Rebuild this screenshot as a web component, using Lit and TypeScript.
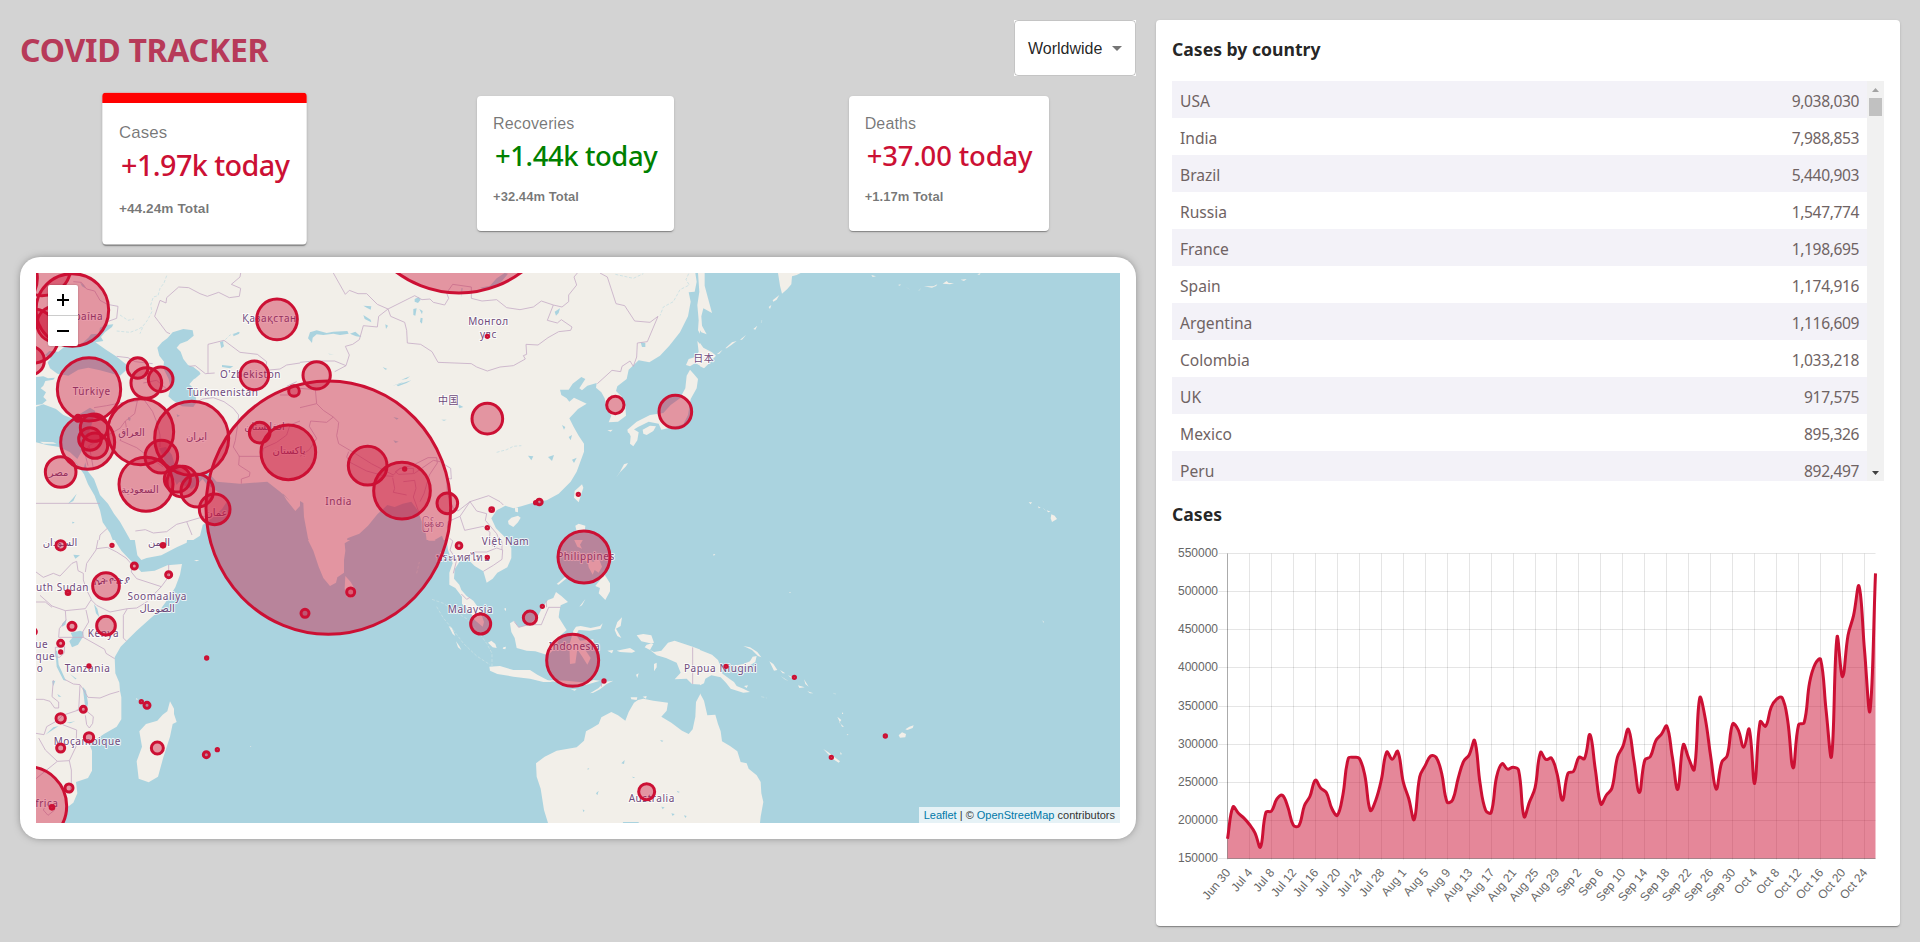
import { LitElement, html, svg, css } from "lit";
import { customElement, property } from "lit/decorators.js";
import { classMap } from "lit/directives/class-map.js";

const COUNTRIES: [string, string][] = [
  ["USA", "9,038,030"],
  ["India", "7,988,853"],
  ["Brazil", "5,440,903"],
  ["Russia", "1,547,774"],
  ["France", "1,198,695"],
  ["Spain", "1,174,916"],
  ["Argentina", "1,116,609"],
  ["Colombia", "1,033,218"],
  ["UK", "917,575"],
  ["Mexico", "895,326"],
  ["Peru", "892,497"],
];

/* Daily new cases, in hundreds, from Jun 30 to Oct 26. */
const DAILY = [
  1758, 2176, 2093, 2029, 1946, 1837, 1650, 2106, 2121, 2281, 2329, 2172, 1937, 1930, 2193, 2313,
  2526, 2421, 2365, 2156, 2066, 2330, 2813, 2827, 2813, 2593, 2131, 2265, 2527, 2896, 2803, 2904,
  2505, 2287, 2011, 2571, 2718, 2845, 2826, 2615, 2239, 2270, 2549, 2775, 2858, 3046, 2483, 2134,
  2101, 2571, 2744, 2672, 2698, 2661, 2050, 2243, 2427, 2891, 2798, 2817, 2615, 2264, 2617, 2641,
  2827, 2809, 3126, 2658, 2214, 2333, 2421, 2827, 2970, 3196, 2789, 2366, 2792, 2836, 3045, 3128,
  3235, 2833, 2407, 2992, 2811, 2668, 3607, 3336, 2833, 2410, 2761, 2849, 3266, 3186, 2958, 3196,
  2484, 3295, 3235, 3483, 3590, 3610, 3314, 2689, 3256, 3279, 3807, 4049, 4113, 3445, 2840, 4404,
  3884, 4429, 4685, 5072, 4232, 3438, 5240,
];

const TICKS = [
  "Jun 30", "Jul 4", "Jul 8", "Jul 12", "Jul 16", "Jul 20", "Jul 24", "Jul 28", "Aug 1", "Aug 5",
  "Aug 9", "Aug 13", "Aug 17", "Aug 21", "Aug 25", "Aug 29", "Sep 2", "Sep 6", "Sep 10", "Sep 14",
  "Sep 18", "Sep 22", "Sep 26", "Sep 30", "Oct 4", "Oct 8", "Oct 12", "Oct 16", "Oct 20", "Oct 24",
];

@customElement("stat-card")
class StatCard extends LitElement {
  @property() label = "";
  @property() today = "";
  @property() total = "";
  @property({ type: Boolean }) positive = false;
  @property({ type: Boolean, reflect: true }) selected = false;

  static styles = css`
    :host {
      display: block;
      box-sizing: border-box;
      height: 135px;
      padding: 16px;
      background: #fff;
      border-radius: 4px;
      color: rgba(0, 0, 0, 0.54);
      font-family: "Liberation Sans", Arial, sans-serif;
      box-shadow: 0 2px 1px -1px rgba(0, 0, 0, 0.2), 0 1px 1px rgba(0, 0, 0, 0.14), 0 1px 3px rgba(0, 0, 0, 0.12);
      white-space: nowrap;
    }
    :host([selected]) {
      height: 145px;
      border-top: 10px solid #ff0000;
      transform: scale(1.05);
    }
    .label {
      font-size: 16px;
      line-height: 24px;
      letter-spacing: 0.15px;
    }
    .today {
      margin: 1px 0 14px 2px;
      color: #cc1034;
      font: 500 27.4px/37px "Noto Sans", "Open Sans", sans-serif;
      letter-spacing: -0.12px;
    }
    .today.positive {
      color: green;
      letter-spacing: -0.38px;
    }
    :host([selected]) .today {
      letter-spacing: -0.55px;
    }
    .total {
      font-size: 13px;
      line-height: 18px;
      font-weight: 700;
      letter-spacing: 0.05px;
    }
  `;

  render() {
    return html`
      <div class="label">${this.label}</div>
      <div class=${classMap({ today: true, positive: this.positive })}>${this.today}</div>
      <div class="total">${this.total}</div>
    `;
  }
}

interface Tile {
  x: number;
  y: number;
  w: number;
  h: number;
  ox: number;
  oy: number;
  ground: "land" | "sea";
  sea?: string;
  land?: string;
  lake?: string;
  border?: string;
  faint?: string;
}

/* Base map tiles. Path units are a third of a pixel, offset by (ox, oy). */
const TILES: Tile[] = [
  {
    x: 0, y: 0, w: 264, h: 267, ox: 48, oy: 54, ground: "land",
    sea: `M75 300L88 288 115 290 140 270 165 276 190 262 205 248 213 238 236 236 240 218 258 210 280 208 276 216 255 232 243 246 250 258 226 262 258 284 288 304 318 328 318 346 300 362 270 354 240 346 205 338 175 344 145 362 112 356 90 340 83 322 92 312Z
      M48 455L70 448 108 462 130 480 160 492 178 478 210 458 226 468 220 490 212 520 196 560 184 590 172 612 150 592 118 576 80 570 48 562Z
      M48 366L70 364 84 370 105 368 100 374 76 378 70 392 62 400 78 412 70 426 80 436 66 448 48 450Z
      M490 222L518 226 521 242 502 258 480 266 470 278 482 290 490 312 504 330 520 336 540 352 524 370 508 388 522 402 530 442 520 456 486 454 458 436 445 424 452 400 446 372 430 340 432 320 418 302 412 278 426 262 442 250 458 232Z
      M158 610L176 632 190 644 196 622 201 646 222 672 240 720 264 746 282 776 300 800 328 850 346 884 346 900 290 900 284 870 270 834 248 802 240 766 224 722 204 688 192 658Z
      M418 580L438 576 456 600 466 636 490 656 520 668 545 656 562 652 575 664 590 680 660 686 742 680 782 712 812 740 786 712 800 736 826 768 848 744 852 800 860 840 884 900 400 900 450 884 500 868 540 842 548 810 580 786 606 762 624 734 590 708 560 688 548 672 530 690 514 702 490 690 478 680 470 690 452 650 436 622Z`,
    land: "M784 712L806 710 826 706 816 722 800 722Z M190 480L214 474 206 482 196 486Z M60 560L100 562 110 566 70 566Z",
    lake: `M868 244L878 230 896 226 886 240 874 262 864 256Z M600 262L608 258 612 274 604 280Z M640 238L656 230 658 236 640 244Z M514 335L528 344 542 356 524 372 514 360Z M180 82L192 90 196 100 186 94Z M606 330L640 334 630 340 606 336Z
      M324 486L332 490 330 498 324 494Z M470 478L480 482 472 486Z M144 746L160 728 170 716 160 738Z M156 800L164 802 158 806Z`,
    faint: "M440 62L432 84 420 100 414 122 400 126 392 150 396 170 382 196 370 212 360 236 M290 228L330 232 352 224 370 214 M660 232L630 240 616 254 606 266 M300 180L324 196 342 192",
    border: `M662 54L660 66 634 88 662 100 658 124 628 128 596 112 562 124 540 116 506 98 476 96 440 128 438 144 420 136 404 184 416 200 440 232 450 236
      M160 80L184 82 200 102 224 108 240 136 262 148 294 154 290 190 262 200
      M508 334L526 332 556 356 584 354 M564 354L564 268 612 256 660 292 712 298 740 320 736 346 780 342 800 330 840 324
      M290 304L324 308 346 320 398 326 M318 346L340 366 380 372 M370 384L410 376 440 402
      M222 458L260 452 300 444 352 438 360 430 378 434 M352 438L344 476 316 498 320 524 300 556 350 578 390 608 430 636
      M372 434L398 470 412 506 420 540 420 576 M520 446L548 432 580 428 612 440 640 460 656 480 652 516 646 556 640 576 658 604 656 630 690 652 688 664 664 672 664 686
      M656 604L726 604 730 580 770 562 800 540 810 510 840 498
      M240 840L230 900 M240 840L262 820 M346 828L376 824 400 834 440 830 470 808 500 800 554 784 M500 800L516 840 M48 745L240 745
      M204 632L196 600 206 572 230 560 264 540 M264 540L300 520 316 498 M208 574L220 640 M800 394L830 380 M780 420L840 420`,
  },
  {
    x: 0, y: 267, w: 264, h: 283, ox: 48, oy: 30, ground: "sea",
    land: `M340 0L346 40 352 76 364 90 380 84 424 76 470 52 500 38 502 24 540 10 562 8 562 0Z
      M0 0L276 0 286 34 304 62 328 88 346 106 364 126 404 122 442 106 486 102 480 134 466 172 446 204 420 240 386 270 350 302 322 330 302 350 284 382 286 430 298 458 300 482 304 502 304 568 290 590 252 612 208 642 216 662 216 722 204 744 168 756 172 790 160 818 144 830 128 879 0 879Z
      M450 514L462 536 462 552 470 576 458 582 450 620 430 682 414 740 386 757 356 746 350 694 366 650 358 604 378 582 412 572 428 554 442 544Z
      M522 90L538 90 530 94Z M348 504L354 508 350 510Z M690 648L694 649 692 651Z`,
    lake: `M152 308L180 302 190 306 188 322 174 344 156 352 148 334 158 322Z M106 360L112 364 116 404 138 452 130 450 110 410Z M188 470L198 482 204 520 200 540 194 520Z M222 222L232 236 238 262 228 250Z M126 282L140 268 136 284 126 290Z
      M76 614L100 592 116 588 92 604Z M96 454L106 452 100 468Z M140 578L166 574 150 580Z M160 74L180 76 166 86Z M112 492L124 500 116 500Z M150 432L170 446 166 448Z`,
    border: `M48 126L70 142 100 130 120 138 156 100 170 94 174 122 190 130 190 150 200 180 214 208 196 236 136 242 96 228 60 196
      M196 126L200 100 228 60 236 20 242 10 M230 56L262 52 290 66 318 84 336 104 334 126 350 146 424 170 446 140 446 104 M424 170L380 216 350 234 322 236 270 246 230 226 214 210 M322 236L310 256 310 324 320 334
      M48 216L76 216 96 232 M136 242L138 270 118 296 116 322 190 322 188 306 206 276 198 240 M190 322L254 358 258 370 284 386
      M106 352L134 350 132 370 118 382 106 380Z M100 450L96 500 116 516 116 534 104 534 90 514 70 508 48 508
      M134 448L160 462 180 464 188 476 204 502 240 504 270 492 298 484 M180 466L176 540 128 556 112 572 80 590 72 614 48 610 M128 584L170 600 168 650 148 692 112 694 76 660 56 624
      M170 540L196 540 220 560 218 580 208 594 200 584 196 556 M148 692L154 720 154 756 150 790 134 780 138 760 M112 694L48 746 M70 840L84 856 104 840 94 824 78 824Z M346 0L350 10 400 6`,
  },
  {
    x: 264, y: 0, w: 400, h: 267, ox: 0, oy: 54, ground: "land",
    sea: `M1186 54L1190 80 1184 110 1166 112 1172 140 1164 184 1140 232 1108 272 1080 302 1048 322 1016 316 986 344 980 372 952 394 948 408 964 424 976 452 978 482 954 500 926 502 934 482 920 462 914 430 904 412 888 398 890 384 862 392 846 406 838 400 856 372 844 366 818 386 806 404 780 404 784 420 800 430 808 440 822 428 860 446 834 462 808 490 820 514 836 542 852 566 852 590 830 650 812 680 776 716 740 736 704 742 664 754 640 760 616 752 590 766 574 790 588 820 618 850 634 880 636 900 1260 900 1260 54Z
      M136 900L142 850 178 836 204 812 232 778 262 750 284 756 308 746 334 740 352 764 366 800 376 826 380 856 402 856 426 842 440 880 442 900Z
      M0 738L10 744 12 786 24 850 46 900 0 900Z`,
    land: `M1194 54L1214 54 1214 92 1224 130 1232 172 1210 160 1202 186 1206 214 1218 238 1206 246 1194 226 1196 196 1192 150 1198 110Z
      M1192 258L1210 278 1236 292 1250 304 1226 326 1212 340 1186 324 1170 334 1158 330 1166 312 1186 306 1196 290Z
      M1170 344L1182 358 1194 372 1190 400 1172 432 1164 480 1150 508 1120 516 1084 524 1076 506 1046 500 1014 516 984 534 982 524 1010 500 1050 480 1090 474 1112 450 1140 430 1156 400 1160 362Z
      M984 528L1000 522 1016 532 1012 556 1000 574 990 566 992 544Z M1028 524L1050 512 1068 514 1060 528 1040 540 1030 536Z
      M846 688L850 698 836 742 822 728 824 708Z M624 798L634 788 654 782 662 788 654 802 640 816 626 808Z M644 756L654 758 654 772 646 770Z M826 812L836 806 856 812 854 830 830 830Z
      M972 628L984 624 978 634 960 652 948 668 960 650Z M922 526L938 524 932 530Z M776 454L788 454 780 456Z`,
    lake: `M24 250L30 232 50 226 80 234 100 230 142 228 146 236 120 240 100 236 70 240 50 238 38 248 36 264Z M344 132L356 126 362 134 354 144 344 140Z M190 152L214 154 212 164 200 158Z M190 180L212 194 214 202 194 192Z M150 236L166 230 184 246 168 244Z
      M256 208L264 212 258 222Z M340 162L350 160 346 182 340 180Z M358 162L368 168 366 178Z M362 188L368 190 366 206 360 200Z M290 390L334 376 320 384 294 394Z M304 374L330 364 320 372Z M278 392L312 380 300 386Z
      M764 170L780 160 776 174 768 182Z M1022 262L1036 264 1036 276 1026 276Z M472 446L490 456 478 460Z M424 494L440 494 432 497Z M248 336L262 342 256 344Z M744 606L762 600 756 618Z M684 602L700 604 694 616Z M786 510L796 516 792 524Z M806 546L816 540 812 556Z M816 614L830 608 822 624Z M84 296L102 298 88 298Z
      M540 98L570 92 590 70 614 54 624 56 606 78 584 94 556 104Z M484 100L484 128 488 100Z M280 486L296 490 290 494Z M280 556L296 560 286 564Z`,
    faint: "M590 592L620 584 640 574 664 572 M1166 56L1158 74 1168 90 1140 104 1120 140 1090 156 1080 182 M946 58L1000 70 1030 56",
    border: `M100 54L136 118 148 106 174 116 200 116 232 148 264 162 236 184 232 216 190 212 178 254 158 268 136 274 148 300 138 332 104 350
      M264 162L344 122 366 134 390 132 400 142 434 150 446 130 440 114 458 88 514 96 514 130 546 138 590 134 620 158 660 164 700 156 724 138 760 150 786 156 806 140 806 120 830 90 822 66 832 54 M760 150L742 196 772 204 784 194 816 216 812 226 776 230 744 248 714 270 678 268 680 298 670 302 676 312 640 332 600 336 562 348 530 336 514 326 414 322 396 290 362 268 322 264 320 226 314 202 272 184 264 162
      M900 54L922 66 948 146 974 152 1004 198 1050 202 1074 184 1042 260 1012 264 1010 306 1000 334 990 318 966 334 962 350 936 346 892 386
      M0 322L40 318 104 318 138 332 M0 400L46 404 50 446 0 458 M50 446L70 466 100 486 116 502 114 520 110 542 116 566 160 592 214 626 280 660 300 640 342 630 M100 486L80 502 32 498 28 514 50 550 28 584 0 604
      M146 590L140 606 150 622 200 648 250 662 280 664 M286 650L300 640 340 640 340 656 296 658Z M342 656L400 616 420 620 452 640 454 672 440 670 442 716 460 760 474 768 510 740
      M278 668L284 700 280 712 320 720 M310 680L344 676 348 700 340 726 356 770 M340 630L384 608 410 608 412 624 388 660 372 716 360 740 M442 820L444 800 480 784 510 740 566 722 600 740 610 750 M510 740L530 768 560 776 556 796 590 836 600 860 M480 784L494 826 550 814 570 832 566 880 480 884 450 850`,
  },
  {
    x: 264, y: 267, w: 400, h: 283, ox: 0, oy: 30, ground: "sea",
    land: `M14 0L24 30 40 62 56 110 70 144 90 168 108 158 112 142 132 128 132 90 136 62 134 40 160 24 180 12 204 0Z M136 138L152 156 168 184 156 204 140 200 134 176Z
      M380 0L376 20 386 32 404 32 424 18 440 28 444 60 458 100 448 128 448 164 466 174 486 200 486 222 510 244 524 270 548 290 552 276 540 240 520 212 500 198 484 180 478 164 462 146 464 118 478 96 500 84 524 108 550 124 560 158 578 146 592 128 622 112 634 84 634 54 618 24 588 0Z
      M568 410L600 408 640 420 690 420 712 434 742 450 760 456 730 456 690 446 640 440 592 432 570 422Z M744 450L800 452 860 458 880 450 900 452 860 464 790 462Z M812 478L830 478 824 482Z M870 490L896 474 912 456 940 452 920 462 900 478 880 488Z
      M768 186L784 198 804 216 782 226 778 246 776 262 790 284 800 300 782 316 772 340 756 364 744 376 706 364 680 362 650 354 644 324 634 306 630 280 642 272 656 292 686 284 712 262 728 230 744 210 760 204Z
      M820 302L828 290 842 288 872 294 900 288 908 280 902 296 870 302 836 300 828 314 840 332 880 328 880 336 846 342 860 366 872 384 862 404 848 382 832 358 826 400 810 402 808 346Z
      M944 300L952 276 966 262 962 288 948 296 964 324 952 318Z M950 362L990 354 1006 364 996 368 960 366Z M922 362L940 360 936 370Z M1010 316L1030 312 1054 316 1062 338 1040 344 1034 352 1062 366 1084 362 1104 338 1124 332 1178 350 1260 382 1260 440 1222 450 1212 464 1176 462 1160 446 1124 448 1142 428 1130 398 1098 384 1070 376 1050 360 1060 342 1024 334Z M1062 402L1070 398 1070 412 1062 424Z
      M816 0L856 0 852 24 840 44 846 56 832 50 818 20Z M850 70L866 84 870 96 856 92Z M862 88L880 96 896 84 906 110 896 128 884 120 878 134 866 112Z M886 168L900 150 914 134 930 160 930 184 916 210 896 190 900 174Z M770 162L796 140 798 146 776 164Z M838 230L852 212 856 208 846 226Z
      M564 338L574 332 586 342 590 354 578 352Z M610 352L618 350 616 358 608 356Z M612 236L618 234 618 244Z M446 288L456 294 466 318 458 312Z M468 334L478 348 484 360 474 352Z
      M708 700L734 680 770 662 830 652 852 632 858 604 876 594 896 582 904 562 934 546 954 556 976 572 986 546 1002 518 1014 510 1030 506 1060 512 1104 518 1100 542 1084 560 1114 578 1146 602 1166 612 1178 598 1186 560 1188 516 1202 490 1212 516 1222 548 1244 560 1250 588 1260 600 1260 879 744 879 732 840 722 776 710 740Z M992 502L1012 502 1010 510 994 508Z M1028 500L1040 498 1038 506Z M1008 434L1016 430 1012 444Z`,
    lake: "M1080 630L1090 632 1086 636Z M964 700L974 690 972 702Z M862 716L868 714 864 720Z M996 740L1006 742 1000 744Z M888 790L896 782 892 796Z M1084 830L1094 832 1088 838Z M1114 850L1124 852 1118 858Z M1152 856L1160 858 1156 864Z M970 876L1016 876 1016 879 968 879Z M1130 782L1140 786 1134 788Z M848 838L854 842 850 846Z",
    faint: "M396 208L430 220 466 246 500 266 530 300 560 340 576 370 576 410 M410 230L430 264 460 300 490 340 530 378 570 404 M350 130L358 96",
    border: `M1178 352L1178 462 M642 274L656 292 686 284 724 284 734 260 746 232 782 232 M738 212L740 232 M904 456L904 470 M484 192L500 208 510 202
      M450 20L458 34 450 60 470 90 460 130 M550 124L580 106 606 88 608 60 590 54 560 66 520 66 524 90 M560 0L566 24 580 50 M600 0L606 40 606 60`,
  },
  {
    x: 664, y: 0, w: 420, h: 277, ox: 0, oy: 54, ground: "sea",
    land: `M0 54L14 54 14 92 24 130 36 174 10 160 4 184 6 212 20 238 4 232 0 226Z M0 264L10 278 36 292 48 302 26 326 12 340 0 334Z M234 54L302 54 290 60 276 64 274 88 262 102 246 116 240 92Z
      M218 136L238 120 230 134 220 140Z M206 156L214 150 210 162Z M196 176L204 168Z M160 222L172 212 166 224Z M120 254L138 240 126 254Z M76 280L96 262 110 258 94 270 80 280Z M50 298L68 284 58 296Z M72 300L78 296Z
      M514 60L528 64 518 66Z M530 74L536 76Z M594 90L602 88 600 92Z M618 96L632 106 624 100Z M672 94L706 94 696 98Z M700 94L712 88 708 94Z M728 86L740 78 746 84 762 84 750 88Z M782 74L800 72 792 78Z M814 70L826 64Z M832 58L842 54 838 60Z
      M986 742L996 742 992 748Z M1014 754L1022 758 1016 760Z M1040 766L1052 770 1044 772Z M1054 778L1064 782 1071 792 1056 801 1052 790Z M52 872L60 866Z M38 898L44 900 42 902Z`,
    faint: "M184 204L186 190 M1030 760L1036 766 M656 108L662 100",
  },
  {
    x: 664, y: 277, w: 420, h: 273, ox: 0, oy: 0, ground: "sea",
    land: `M0 300L36 314 54 330 62 350 66 370 90 388 102 396 110 408 130 416 150 426 130 428 92 416 78 398 62 382 34 376 16 386 12 400 0 406Z M100 348L130 342 150 334 158 320 170 318 166 336 150 346 110 352Z M130 288L150 292 172 306 184 322 174 318 156 300Z M72 282L86 280Z
      M208 334L220 342 232 360 222 362Z M240 360L256 370 248 370Z M242 378L266 394 254 388Z M294 406L314 412 298 414Z M312 388L326 410 316 402Z M322 424L340 430 330 430Z M300 444L312 448Z M264 376L284 384 276 386Z
      M412 500L424 510 418 518 432 530 426 530Z M426 486L430 492 426 492Z M434 508L440 530Z M440 552L446 554 442 556Z M456 572L460 576Z M370 597L384 606 404 622 420 634 416 638 400 628 382 610Z M420 606L426 612 422 614Z
      M596 556L606 547 618 552 616 562 600 563Z M616 538L628 530 641 526 638 534 622 540Z M608 577L616 577Z M132 408L144 406 140 414Z M172 402L180 404Z M266 127L274 127 270 129Z M40 12L46 13 41 18Z M1027 211L1032 216 1030 218Z M350 153L354 155Z
      M0 430L12 452 22 496 46 494 54 522 62 544 66 574 90 588 112 604 122 636 140 640 146 656 170 676 182 696 184 730 190 756 182 800 180 819 0 819Z`,
    faint: "M184 440L200 444 M400 430L408 432",
  },
];

/* Country names: x, y in map pixels. */
const LABELS: [string, number, number][] = [
  ["Україна", 46.5, 47],
  ["Türkiye", 55.7, 122.3],
  ["Қазақстан", 233.5, 48.5],
  ["O'zbekiston", 214.5, 104.5],
  ["Türkmenistan", 186.8, 122.5],
  ["العراق", 95.5, 162.5],
  ["ایران", 160.5, 167],
  ["افغانستان", 228.5, 157],
  ["پاکستان", 253, 181],
  ["مصر", 22.5, 203],
  ["السعودية", 104, 219.5],
  ["عمان", 180.5, 243],
  ["السودان", 24, 273],
  ["اليمن", 123, 272.5],
  ["ኢትዮጵያ", 76, 310.5],
  ["uth Sudan", 26.5, 317.8],
  ["Soomaaliya", 121.2, 327],
  ["الصومال", 121.2, 339],
  ["Kenya", 67.5, 363.7],
  ["ue", 5.8, 374.5],
  ["que", 9.4, 386.5],
  ["o", 4, 398.5],
  ["Tanzania", 51.5, 399],
  ["Moçambique", 51.3, 472],
  ["frica", 10.8, 534],
  ["Монгол", 452.5, 52],
  ["улс", 452.5, 64.5],
  ["中国", 412.5, 131.2],
  ["日本", 667.7, 89],
  ["India", 302.7, 232],
  ["မြန်မာ", 397, 254],
  ["Việt Nam", 469.5, 272],
  ["ประเทศไทย", 427, 288],
  ["Malaysia", 434.5, 340.3],
  ["Philippines", 550, 286.6],
  ["Indonesia", 538.5, 377.3],
  ["Papua Niugini", 684.5, 398.7],
  ["Australia", 615.8, 529.3],
];

/* Case circles: centre x, centre y, radius, in thirds of a pixel. */
const CIRCLES: number[][] = [
  [157, 165, 109], [66, 36, 86], [-44, 70, 96], [34, 243, 82], [104, 207, 53], [30, 317, 43],
  [207, 403, 95], [353, 339, 31], [379, 384, 46], [422, 373, 37], [362, 530, 99], [515, 550, 111],
  [378, 688, 81], [203, 562, 81], [222, 518, 41], [210, 552, 34], [225, 572, 38], [174, 490, 9],
  [122, 651, 46], [424, 605, 49], [472, 672, 39], [487, 680, 46], [532, 707, 49], [584, 763, 46],
  [771, 193, 61], [703, 361, 43], [890, 361, 41], [822, 408, 16], [719, 533, 31], [805, 592, 82],
  [1317, -199, 313], [1402, 491, 46], [1402, 244, 3.5], [1786, 450, 26], [1966, 470, 49],
  [1043, 632, 58], [1146, 707, 85], [1154, 642, 3.5], [1282, 745, 31], [1675, 718, 3.5],
  [1558, 741, 8.5], [1547, 743, 3.5], [1415, 764, 5.5], [1402, 818, 3.5], [1317, 872, 8.5],
  [1402, 907, 3.5], [1692, 906, 78], [992, 1011, 12], [855, 1075, 12], [1530, 1088, 20],
  [1567, 1054, 3.5], [1382, 1107, 30], [1658, 1216, 78], [1752, 1278, 3.5], [1880, 1610, 24],
  [2118, 1234, 3.5], [2323, 1267, 3.5], [2596, 1443, 3.5], [2434, 1507, 3.5],
  [122, 871, 14], [276, 871, 3.5], [429, 871, 5.5], [343, 933, 9], [446, 959, 9], [258, 993, 40],
  [144, 1013, 5.5], [258, 1112, 28], [156, 1114, 12], [122, 1165, 9], [122, 1191, 3.5],
  [207, 1233, 3.5], [560, 1209, 3.5], [364, 1340, 3.5], [381, 1351, 9], [190, 1363, 9],
  [122, 1390, 14], [207, 1447, 14], [122, 1479, 12], [412, 1479, 18], [559, 1499, 9],
  [592, 1484, 3.5], [147, 1599, 12], [96, 1657, 5.5], [22, 1653, 118], [40, 1130, 9],
];

@customElement("case-map")
class CaseMap extends LitElement {
  static styles = css`
    :host {
      display: block;
      position: relative;
      height: 550px;
      overflow: hidden;
      background: #aad3df;
      font-family: "Liberation Sans", Arial, sans-serif;
    }
    .map {
      display: block;
    }
    .sea { fill: #aad3df; }
    .ground-land, .land { fill: #f2efe9; }
    .ground-sea { fill: #aad3df; }
    .border { fill: none; stroke: #c9b0c8; stroke-width: 2.6; stroke-linejoin: round; }
    .faint { fill: none; stroke: #c6dfe3; stroke-width: 2.4; stroke-dasharray: 9 5; }
    .label {
      fill: #6f4a7c;
      stroke: #fff;
      stroke-opacity: 0.75;
      stroke-width: 2px;
      stroke-linejoin: round;
      paint-order: stroke;
      text-anchor: middle;
      font: 10px "Noto Sans", "DejaVu Sans", "Noto Sans CJK SC", sans-serif;
      letter-spacing: 0.55px;
    }
    .circle {
      fill: #cc1034;
      fill-opacity: 0.4;
      stroke: #cc1034;
      stroke-width: 9;
    }
    .zoom {
      position: absolute;
      left: 12px;
      top: 12px;
      width: 30px;
      border-radius: 2px;
      background: #fff;
      box-shadow: 0 0 2px rgba(0, 0, 0, 0.3);
    }
    .zoom-btn {
      display: grid;
      place-items: center;
      height: 30px;
    }
    .zoom-btn + .zoom-btn {
      border-top: 1px solid #ccc;
    }
    .attribution {
      position: absolute;
      right: 0;
      bottom: 0;
      padding: 0 5px;
      height: 16px;
      font-size: 11px;
      line-height: 16px;
      color: #333;
      background: rgba(255, 255, 255, 0.7);
      white-space: nowrap;
    }
    .link { color: #0078a8; }
  `;

  render() {
    return html`
      <svg class="map" width="1084" height="550" viewBox="0 0 1084 550">
        ${TILES.map(
          (t) => svg`<svg x=${t.x} y=${t.y} width=${t.w} height=${t.h}
            viewBox="${t.ox} ${t.oy} ${t.w * 3} ${t.h * 3}" preserveAspectRatio="none">
            <rect class="ground-${t.ground}" x=${t.ox} y=${t.oy} width=${t.w * 3} height=${t.h * 3}></rect>
            <path class="sea" d=${t.sea ?? ""}></path>
            <path class="land" d=${t.land ?? ""}></path>
            <path class="faint" d=${t.faint ?? ""}></path>
            <path class="sea" d=${t.lake ?? ""}></path>
            <path class="border" d=${t.border ?? ""}></path>
          </svg>`
        )}
        ${LABELS.map(([name, x, y]) => svg`<text class="label" x=${x} y=${y}>${name}</text>`)}
        <g transform="translate(-16 -18) scale(0.333333)">
          <ellipse class="circle" cx="925" cy="758" rx="367" ry="380"></ellipse>
          ${CIRCLES.map(([x, y, r]) => svg`<circle class="circle" cx=${x} cy=${y} r=${r}></circle>`)}
        </g>
      </svg>
      <div class="zoom">
        <div class="zoom-btn">
          <svg width="12" height="12" viewBox="0 0 12 12"><path d="M6 0V12M0 6H12" stroke="#000" stroke-width="2"></path></svg>
        </div>
        <div class="zoom-btn">
          <svg width="12" height="12" viewBox="0 0 12 12"><path d="M0 6H12" stroke="#000" stroke-width="2"></path></svg>
        </div>
      </div>
      <div class="attribution"><span class="link">Leaflet</span> | © <span class="link">OpenStreetMap</span> contributors</div>
    `;
  }
}

const PLOT = { left: 55.5, top: 13.5, width: 648, height: 305 };

/* Tension-based spline through the points, control points kept inside the plot. */
function splinePath(points: { x: number; y: number }[], tension: number): string {
  const clampY = (v: number) => Math.max(PLOT.top, Math.min(PLOT.top + PLOT.height, v));
  const controls = points.map((p, i) => {
    const prev = points[Math.max(0, i - 1)];
    const next = points[Math.min(points.length - 1, i + 1)];
    const d1 = Math.hypot(p.x - prev.x, p.y - prev.y);
    const d2 = Math.hypot(next.x - p.x, next.y - p.y);
    const fa = (tension * d1) / (d1 + d2);
    const fb = (tension * d2) / (d1 + d2);
    return {
      inX: p.x - fa * (next.x - prev.x),
      inY: clampY(p.y - fa * (next.y - prev.y)),
      outX: p.x + fb * (next.x - prev.x),
      outY: clampY(p.y + fb * (next.y - prev.y)),
    };
  });
  return points
    .map((p, i) =>
      i === 0
        ? `M${p.x} ${p.y}`
        : `C${controls[i - 1].outX} ${controls[i - 1].outY} ${controls[i].inX} ${controls[i].inY} ${p.x} ${p.y}`
    )
    .join("");
}

@customElement("case-chart")
class CaseChart extends LitElement {
  static styles = css`
    :host { display: block; }
    .chart { display: block; overflow: visible; }
    .grid { stroke: rgba(0, 0, 0, 0.1); }
    .axis { fill: none; stroke: rgba(0, 0, 0, 0.25); }
    .area { fill: #cc1034; fill-opacity: 0.5; }
    .line { fill: none; stroke: #cc1034; stroke-width: 3; }
    .tick {
      fill: #666;
      font: 12px "Liberation Sans", Arial, sans-serif;
      text-anchor: end;
    }
  `;

  render() {
    const { left, top, width, height } = PLOT;
    const bottom = top + height;
    const step = width / (DAILY.length - 1);
    const points = DAILY.map((v, i) => ({
      x: left + i * step,
      y: bottom - ((v - 1500) / 4000) * height,
    }));
    const line = splinePath(points, 0.4);
    const levels = Array.from({ length: 9 }, (_, i) => 550000 - i * 50000);
    return html`
      <svg class="chart" width="712" height="372" viewBox="0 0 712 372">
        ${levels.map((level, i) => {
          const y = Math.round(top + (i * height) / 8 - 0.5) + 0.5;
          return svg`<line class="grid" x1=${left - 9} x2=${left + width} y1=${y} y2=${y}></line>
            <text class="tick" x=${left - 9.5} y=${y + 3.5}>${level}</text>`;
        })}
        ${TICKS.map((label, i) => {
          const x = Math.round(left + i * 4 * step - 0.5) + 0.5;
          return svg`<line class="grid" x1=${x} x2=${x} y1=${top} y2=${bottom + 1}></line>
            <text class="tick" transform="translate(${x + 3.5} ${bottom + 14.5}) rotate(-50)">${label}</text>`;
        })}
        <path class="area" d="${line}V${bottom}H${left}Z"></path>
        <path class="axis" d="M${left} ${top}V${bottom}H${left + width}"></path>
        <path class="line" d=${line}></path>
      </svg>
    `;
  }
}

@customElement("app-root")
class AppRoot extends LitElement {
  static styles = css`
    :host {
      display: flex;
      justify-content: space-between;
      box-sizing: border-box;
      height: 942px;
      padding: 20px 20px 16px;
      overflow: hidden;
      background: #d3d3d3;
      font-family: "Noto Sans", "Open Sans", sans-serif;
    }
    .main { width: 1116px; }
    .header {
      display: flex;
      justify-content: space-between;
      align-items: center;
      height: 56px;
      margin-bottom: 20px;
    }
    .title {
      margin: 3px 0 0;
      color: #b73a59;
      font: 700 32px/44px "Noto Sans", "Open Sans", sans-serif;
      letter-spacing: -0.25px;
    }
    .dropdown { background: #fff; }
    .dropdown-field {
      display: flex;
      align-items: center;
      justify-content: space-between;
      box-sizing: border-box;
      width: 122px;
      height: 56px;
      padding: 0 13px 0 13px;
      border: 1px solid rgba(0, 0, 0, 0.23);
      border-radius: 4px;
      color: rgba(0, 0, 0, 0.87);
      font: 16px "Liberation Sans", Arial, sans-serif;
    }
    .field-text { padding-top: 1px; }
    .stats {
      display: flex;
      justify-content: space-around;
      align-items: flex-start;
      height: 161px;
    }
    .w-cases { width: 195px; }
    .w-recoveries { width: 197px; }
    .w-deaths { width: 200px; }
    .map-card {
      padding: 16px;
      border-radius: 20px;
      background: #fff;
      box-shadow: 0 0 8px -2px rgba(0, 0, 0, 0.5);
    }
    .side {
      box-sizing: border-box;
      width: 744px;
      padding: 15px 16px 16px;
      background: #fff;
      border-radius: 4px;
      box-shadow: 0 2px 1px -1px rgba(0, 0, 0, 0.2), 0 1px 1px rgba(0, 0, 0, 0.14), 0 1px 3px rgba(0, 0, 0, 0.12);
      color: rgba(0, 0, 0, 0.87);
    }
    .heading {
      margin: 0;
      font: 700 17.6px/28px "Noto Sans", "Open Sans", sans-serif;
      letter-spacing: 0;
    }
    .table {
      display: flex;
      height: 400px;
      margin: 18px 0 19px;
      overflow: hidden;
    }
    .rows { flex: 1; }
    .row {
      display: flex;
      justify-content: space-between;
      height: 37px;
      padding: 0 8px;
      color: #6f6363;
      font-size: 15.6px;
      line-height: 40px;
    }
    .row:nth-child(odd) { background: #f3f2f8; }
    .num { letter-spacing: -0.4px; }
    .scrollbar {
      display: flex;
      flex-direction: column;
      align-items: center;
      width: 17px;
      background: #f1f1f1;
    }
    .arrow {
      display: grid;
      place-items: center;
      height: 17px;
    }
    .thumb {
      width: 13px;
      height: 18px;
      background: #c1c1c1;
      margin-bottom: auto;
    }
    .chart-slot { margin-top: 12px; }
  `;

  render() {
    return html`
      <div class="main">
        <div class="header">
          <h1 class="title">COVID TRACKER</h1>
          <div class="dropdown">
            <div class="dropdown-field">
              <span class="field-text">Worldwide</span>
              <svg width="10" height="5" viewBox="0 0 10 5"><path d="M0 0H10L5 5Z" fill="#757575"></path></svg>
            </div>
          </div>
        </div>
        <div class="stats">
          <stat-card class="w-cases" selected label="Cases" today="+1.97k today" total="+44.24m Total"></stat-card>
          <stat-card class="w-recoveries" positive label="Recoveries" today="+1.44k today" total="+32.44m Total"></stat-card>
          <stat-card class="w-deaths" label="Deaths" today="+37.00 today" total="+1.17m Total"></stat-card>
        </div>
        <div class="map-card"><case-map></case-map></div>
      </div>
      <div class="side">
        <h3 class="heading">Cases by country</h3>
        <div class="table">
          <div class="rows">
            ${COUNTRIES.map(
              ([name, cases]) => html`<div class="row"><span>${name}</span><span class="num">${cases}</span></div>`
            )}
          </div>
          <div class="scrollbar">
            <div class="arrow"><svg width="7" height="4" viewBox="0 0 7 4"><path d="M0 4H7L3.5 0Z" fill="#a3a3a3"></path></svg></div>
            <div class="thumb"></div>
            <div class="arrow"><svg width="7" height="4" viewBox="0 0 7 4"><path d="M0 0H7L3.5 4Z" fill="#404040"></path></svg></div>
          </div>
        </div>
        <h3 class="heading">Cases</h3>
        <div class="chart-slot"><case-chart></case-chart></div>
      </div>
    `;
  }
}
